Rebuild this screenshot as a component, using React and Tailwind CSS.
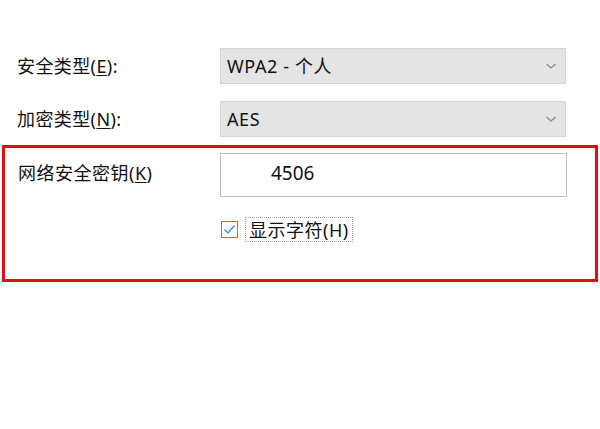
import React from "react";

const font = "font-['Noto_Sans','Noto_Sans_CJK_SC',sans-serif]";

function Chevron() {
  return (
    <svg width="12" height="8" viewBox="0 0 12 8" className="shrink-0">
      <path d="M1.5 2 L6 6 L10.5 2" fill="none" stroke="#8a8a8a" strokeWidth="1.3" />
    </svg>
  );
}

function Select({ text }) {
  return (
    <div className="flex h-[36px] w-[346px] items-center justify-between border border-[#d6d6d6] bg-[#e4e4e4] pl-[6px] pr-[8px]">
      <span className="text-[18px] leading-none tracking-[0.6px] text-[#111]">{text}</span>
      <Chevron />
    </div>
  );
}

function Row({ label, acc, text }) {
  return (
    <div className="flex items-center">
      <div className="w-[220px] pl-[17px] text-[18px] leading-none tracking-[0.4px] text-[#111]">
        {label}(<span className="underline underline-offset-2">{acc}</span>):
      </div>
      <Select text={text} />
    </div>
  );
}

export default function App() {
  return (
    <div className={`${font} h-[429px] w-[600px] overflow-hidden bg-white pt-[48px]`}>
      <div className="flex flex-col gap-[17px]">
        <Row label="安全类型" acc="E" text="WPA2 - 个人" />
        <Row label="加密类型" acc="N" text="AES" />
      </div>
      <div className="mx-[2px] mt-[8px] h-[137px] border-[3px] border-[#e60c16] pt-[5px]">
        <div className="flex items-center">
          <div className="w-[215px] pl-[13px] pb-[4px] text-[18px] leading-none tracking-[0.5px] text-[#111]">
            网络安全密钥(<span className="underline underline-offset-2">K</span>)
          </div>
          <div className="flex h-[44px] w-[347px] items-center border border-[#bdbdbd] bg-white pl-[50px] pb-[4px]">
            <span className="text-[19px] leading-none text-[#111]">4506</span>
          </div>
        </div>
        <div className="mt-[20px] flex items-center pl-[216px]">
          <div className="flex h-[17px] w-[17px] items-center justify-center border-[1.5px] border-[#3b8fdc] bg-white">
            <svg width="13" height="11" viewBox="0 0 13 11">
              <path d="M1.5 5.5 L5 9 L11.5 1.5" fill="none" stroke="#3b8fdc" strokeWidth="1.4" />
            </svg>
          </div>
          <div className="ml-[7px] flex h-[25px] items-center border border-dotted border-[#a0a0a0] px-[3px] text-[18px] leading-none tracking-[0.5px] text-[#111]">
            显示字符(<span>H</span>)
          </div>
        </div>
      </div>
    </div>
  );
}
